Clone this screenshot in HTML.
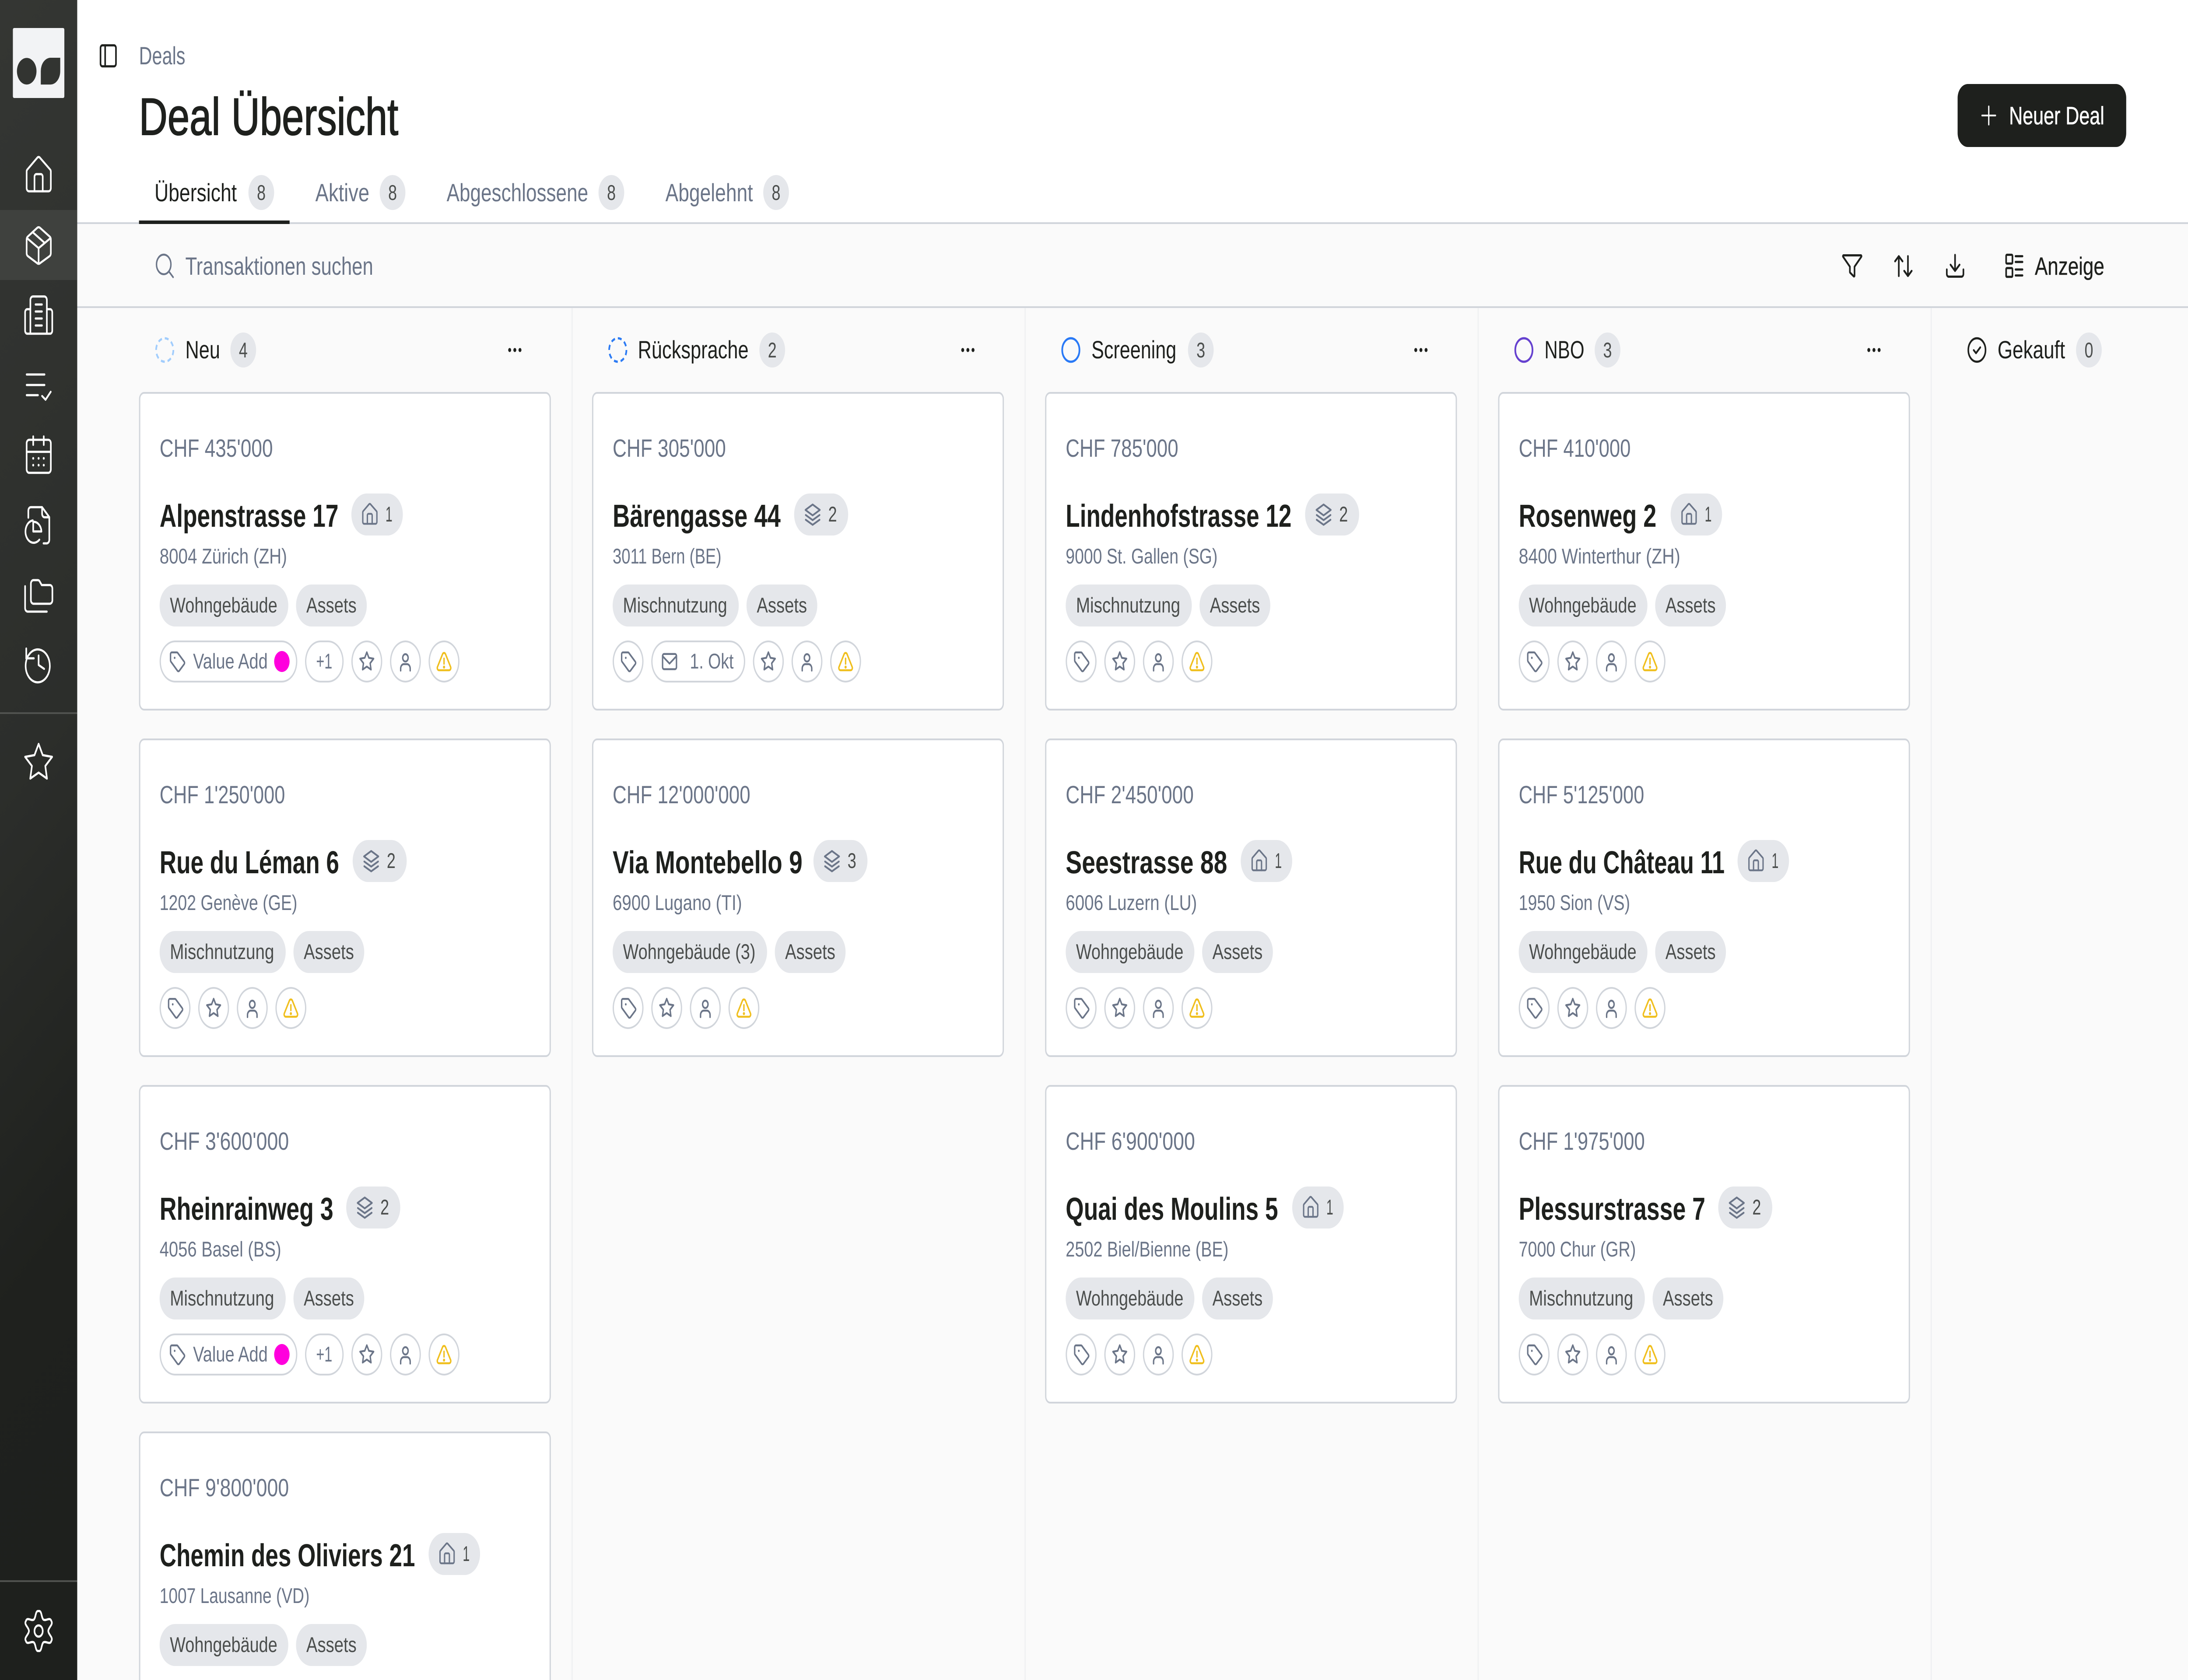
<!DOCTYPE html>
<html lang="de"><head><meta charset="utf-8"><title>Deal Übersicht</title>
<style>
html,body{margin:0;padding:0;background:#fafafa;width:100%;height:3840px;overflow:hidden}
svg{display:block;width:100vw;height:3840px}
text{font-family:"Liberation Sans",Arial,sans-serif;text-rendering:geometricPrecision;white-space:pre}
.t14{font-size:14.3px}
.t12{font-size:12.2px}
.g{fill:#6b7588}
.d{fill:#1e201d}
.n{fill:#4b4e4d}
.ttl{font-size:18.2px;font-weight:700;fill:#1e201d}
.bdg{font-size:12.2px;fill:#4b4e4d;text-anchor:middle}
.side{fill:none;stroke:#fff;stroke-width:1.25;stroke-linecap:round;stroke-linejoin:round}
.ico{fill:none;stroke:#1e201d;stroke-width:1.25;stroke-linecap:round;stroke-linejoin:round}
.sm{fill:none;stroke:#6b7588;stroke-width:1.1;stroke-linecap:round;stroke-linejoin:round}
</style></head><body>
<svg xmlns="http://www.w3.org/2000/svg" viewBox="0 0 1700 960" preserveAspectRatio="none">
<defs>
<linearGradient id="sb" x1="0" y1="0" x2="0.06" y2="1">
<stop offset="0" stop-color="#343633"/><stop offset=".25" stop-color="#30322f"/><stop offset=".47" stop-color="#2c2e2b"/><stop offset=".78" stop-color="#1f211e"/><stop offset="1" stop-color="#1e201d"/>
</linearGradient>
<g id="homeP"><path d="M2.7 10a1.5 1.5 0 0 1 .4-1L10.9 2.2a1.5 1.5 0 0 1 2.2 0L21.1 9a1.5 1.5 0 0 1 .4 1V19.5a1.8 1.8 0 0 1-1.8 1.8H4.5a1.8 1.8 0 0 1-1.8-1.8Z"/><path d="M8.8 21.3V13a1.5 1.5 0 0 1 1.5-1.5h3.4a1.5 1.5 0 0 1 1.5 1.5V21.3"/></g>
<path id="starP" d="M12 1.6 15.2 8 22.5 9 17.2 14.2 18.5 21.4 12 18 5.5 21.4 6.8 14.2 1.5 9 8.8 8Z"/>
<g id="pHome"><rect width="40" height="24" rx="12" fill="#e5e7eb"/><g transform="translate(7.3 4.9) scale(.5833)" class="sm" style="stroke-width:1.8"><use href="#homeP"/></g></g>
<g id="pLayers"><rect width="42" height="24" rx="12" fill="#e5e7eb"/><g transform="translate(7.4 5)" class="sm" style="stroke-width:1.1"><path d="M7 1.3 12.6 4.4 7 7.5 1.4 4.4Z"/><path d="M1.6 7.3 7 10.2 12.4 7.3"/><path d="M1.6 10 7 12.9 12.4 10"/></g></g>
<g id="tagI" class="sm"><path d="M.5 1.6a1 1 0 0 1 1-1h3.9a1 1 0 0 1 .7.3l5 5a1 1 0 0 1 0 1.4l-3.8 3.8a1 1 0 0 1-1.4 0L.8 5.9a1 1 0 0 1-.3-.7Z"/><circle cx="3.7" cy="3.7" r=".65" fill="#6b7588" stroke="none"/></g>
<rect id="c" x=".5" y=".5" width="23" height="23" rx="11.5" fill="#fff" stroke="#d1d5db"/>
<g id="cTag"><use href="#c"/><use href="#tagI" x="6.5" y="6.2"/></g>
<g id="cStar"><use href="#c"/><g transform="translate(6 5.9) scale(.5)" class="sm" style="stroke-width:2.2"><use href="#starP"/></g></g>
<g id="cPerson"><use href="#c"/><g class="sm"><circle cx="12" cy="9.9" r="2.1"/><path d="M8.3 17.2v-1.2a2.5 2.5 0 0 1 2.5-2.5h2.4a2.5 2.5 0 0 1 2.5 2.5v1.2"/></g></g>
<g id="cWarn"><use href="#c"/><g fill="none" stroke="#f0bf1e" stroke-width="1.1" stroke-linecap="round" stroke-linejoin="round"><path d="M10.9 7.7a1.3 1.3 0 0 1 2.2 0l4 7.4a1.3 1.3 0 0 1-1.1 1.9h-8a1.3 1.3 0 0 1-1.1-1.9Z"/><path d="M12 10.3v3"/><circle cx="12" cy="15.2" r=".3" fill="#f0bf1e"/></g></g>
<g id="trio"><use href="#cStar"/><use href="#cPerson" x="30"/><use href="#cWarn" x="60"/></g>
<g id="simple"><use href="#cTag"/><use href="#trio" x="30"/></g>
<g id="vaShape"><rect x=".5" y=".5" width="106" height="23" rx="11.5" fill="#fff" stroke="#d1d5db"/><use href="#tagI" x="8" y="6.2"/><circle cx="95" cy="12" r="6" fill="#ff00dd"/><rect x="113.5" y=".5" width="29" height="23" rx="11.5" fill="#fff" stroke="#d1d5db"/><use href="#trio" x="149"/></g>
<rect id="card" x=".5" y=".5" width="319" height="181" rx="3.5" fill="#fff" stroke="#d1d5db"/>
<g id="dots" fill="#1e201d"><circle cx="-4" r="1.15"/><circle r="1.15"/><circle cx="4" r="1.15"/></g>
</defs>

<rect width="1700" height="960" fill="#fafafa"/>
<!-- header -->
<rect x="60" width="1640" height="127" fill="#fff"/>
<rect x="60" y="127" width="1640" height="1" fill="#d1d5db"/>
<rect x="60" y="175" width="1640" height="1" fill="#d1d5db"/>
<!-- column separators -->
<g fill="#f0f1f3"><rect x="444" y="176" width="1" height="784"/><rect x="796" y="176" width="1" height="784"/><rect x="1148" y="176" width="1" height="784"/><rect x="1500" y="176" width="1" height="784"/></g>

<!-- sidebar -->
<rect width="60" height="960" fill="url(#sb)"/>
<rect y="120" width="60" height="40" fill="#3f413e"/>
<rect x="10" y="16" width="40" height="40" rx="1" fill="#f2f3f5"/>
<circle cx="20.75" cy="40.7" r="7.6" fill="#323431"/>
<path d="M31.7 48.3V40.7A7.6 7.6 0 0 1 39.3 33H46.8V40.7A7.6 7.6 0 0 1 39.2 48.3Z" fill="#323431"/>
<g class="side">
<g transform="translate(18 88)"><use href="#homeP"/></g>
<path d="M28.9 130.2a2 2 0 0 1 2.2 0l7.4 4.9a2 2 0 0 1 1 1.7v7.9a2 2 0 0 1-1 1.7l-7.4 4a2 2 0 0 1-2.2 0l-7.2-4a2 2 0 0 1-1-1.7v-7.9a2 2 0 0 1 1-1.7Z"/>
<path d="M21 136.1 30 141.8 39.2 136.1M30 141.8V150.5M25.3 132.6 34.4 138.6"/>
<path d="M23.6 190.7V171.4a2 2 0 0 1 2-2h8.8a2 2 0 0 1 2 2V190.7M23.6 176.7H21.2a1.7 1.7 0 0 0-1.7 1.7V189a1.7 1.7 0 0 0 1.7 1.7H38.9a1.7 1.7 0 0 0 1.7-1.7V178.4a1.7 1.7 0 0 0-1.7-1.7H36.4M27.6 174H32.6M27.6 178H32.6M27.6 182H32.6M27.6 186H32.6"/>
<path d="M20.7 214H34.6M20.7 220H34.6M20.7 225.8H29.5M32.7 226.3 35.4 228.4 39.4 223.9"/>
<rect x="20.7" y="251.3" width="18.8" height="18.9" rx="2"/><path d="M25.8 249.4V254.2M34 249.4V254.2M20.7 258.2H39.5"/>
<g fill="#fff" stroke="none"><circle cx="25.8" cy="261.9" r=".75"/><circle cx="30" cy="261.9" r=".75"/><circle cx="34" cy="261.9" r=".75"/><circle cx="25.8" cy="265.8" r=".75"/><circle cx="30" cy="265.8" r=".75"/><circle cx="34" cy="265.8" r=".75"/></g>
<path d="M22 295.8V291.8a2 2 0 0 1 2-2H32.7L38.3 295.5V308.5a2 2 0 0 1-2 2H33.8M32.7 289.8V293.6a2 2 0 0 0 2 2H38.3"/>
<path d="M30.6 308.4A6.4 6.4 0 1 1 25.5 297.4"/>
<path d="M25.8 298.2V303.7H32.2A6 6 0 0 0 25.8 298.2Z"/>
<path d="M24 338V333.5a2 2 0 0 1 2-2H29.3a2 2 0 0 1 1.6.8L32.4 334.3H38.7a2 2 0 0 1 2 2V343a2 2 0 0 1-2 2H26a2 2 0 0 1-2-2Z"/>
<path d="M19.5 335V347.5a2 2 0 0 0 2 2H36.4"/>
<path d="M20.6 377A9.4 9.4 0 1 0 23.4 373.2L20.4 376.2"/><path d="M20.4 370.6V376.2H26.3"/><path d="M30 374.6V380L34.3 382.2"/>
<g transform="translate(18 423.5)"><use href="#starP"/></g>
<g transform="translate(30 932)">
<path id="gb" d="M-3.75-6.5C-2-7.6-2.6-11.9 0-11.4 2.6-11.9 2-7.6 3.75-6.5"/>
<use href="#gb" transform="rotate(60)"/><use href="#gb" transform="rotate(120)"/><use href="#gb" transform="rotate(180)"/><use href="#gb" transform="rotate(240)"/><use href="#gb" transform="rotate(300)"/>
<circle r="3.2"/>
</g>
</g>
<rect y="407" width="60" height="1" fill="#50524f"/>
<rect y="903" width="60" height="1" fill="#50524f"/>

<!-- page head -->
<g class="ico"><rect x="78.1" y="25.9" width="12" height="12" rx="1.5"/><path d="M81.7 25.9V37.9"/></g>
<text x="108" y="36.8" class="t14 g" textLength="36" lengthAdjust="spacingAndGlyphs">Deals</text>
<text x="108" y="77" font-size="30" class="d" stroke="#1e201d" stroke-width=".5" textLength="201.5" lengthAdjust="spacingAndGlyphs">Deal Übersicht</text>

<rect x="1521" y="48" width="131" height="36" rx="8" fill="#1e201d"/>
<path d="M1540 66H1550.4M1545.2 60.8V71.2" stroke="#fff" stroke-width="1" stroke-linecap="round"/>
<text x="1561" y="71" class="t14" fill="#fff" stroke="#fff" stroke-width=".18" textLength="74" lengthAdjust="spacingAndGlyphs">Neuer Deal</text>

<!-- tabs -->
<text x="120" y="115" class="t14 d" textLength="64" lengthAdjust="spacingAndGlyphs">Übersicht</text>
<circle cx="203" cy="110" r="10" fill="#e5e7eb"/><text x="203" y="114.3" class="bdg">8</text>
<rect x="108" y="126" width="117" height="2" fill="#1e201d"/>
<text x="245" y="115" class="t14 g" textLength="42" lengthAdjust="spacingAndGlyphs">Aktive</text>
<circle cx="305" cy="110" r="10" fill="#e5e7eb"/><text x="305" y="114.3" class="bdg">8</text>
<text x="347" y="115" class="t14 g" textLength="110" lengthAdjust="spacingAndGlyphs">Abgeschlossene</text>
<circle cx="475" cy="110" r="10" fill="#e5e7eb"/><text x="475" y="114.3" class="bdg">8</text>
<text x="517" y="115" class="t14 g" textLength="68" lengthAdjust="spacingAndGlyphs">Abgelehnt</text>
<circle cx="603" cy="110" r="10" fill="#e5e7eb"/><text x="603" y="114.3" class="bdg">8</text>

<!-- toolbar -->
<g fill="none" stroke="#6b7588" stroke-width="1.1" stroke-linecap="round"><circle cx="127.2" cy="151.1" r="5.6"/><path d="M131.4 155.3 134.5 158.4"/></g>
<text x="144" y="157" class="t14 g" textLength="146" lengthAdjust="spacingAndGlyphs">Transaktionen suchen</text>
<g class="ico">
<path d="M1432.4 145.9H1445.8a.5.5 0 0 1 .4.8L1440.9 152.4V157.6a.4.4 0 0 1-.6.3L1437.6 155.9a.6.6 0 0 1-.3-.5V152.4L1432 146.7a.5.5 0 0 1 .4-.8Z"/>
<path d="M1475.3 157.7V146.4M1472.4 149.3 1475.3 146.4 1478.2 149.3M1482.4 146.4V157.7M1479.5 154.8 1482.4 157.7 1485.3 154.8"/>
<path d="M1519 145.7V154.6M1515.5 151.3 1519 154.8 1522.5 151.3M1512.6 154V156.6a1.5 1.5 0 0 0 1.5 1.5H1524a1.5 1.5 0 0 0 1.5-1.5V154"/>
<rect x="1558.7" y="145.6" width="4.9" height="5" rx=".6"/><rect x="1558.7" y="153.2" width="4.9" height="5" rx=".6"/><path d="M1566 146.4H1571.4M1566 149.7H1571.4M1566 154H1571.4M1566 157.4H1571.4"/>
</g>
<text x="1581" y="157" class="t14 d" stroke="#1e201d" stroke-width=".12" textLength="54" lengthAdjust="spacingAndGlyphs">Anzeige</text>

<!-- column headers -->
<circle cx="128" cy="200" r="6.7" fill="none" stroke="#a1cdfd" stroke-width="1.3" stroke-dasharray="3 2.26"/>
<text x="144" y="204.8" class="t14 d" textLength="27" lengthAdjust="spacingAndGlyphs">Neu</text>
<circle cx="189" cy="200" r="10" fill="#e5e7eb"/><text x="189" y="204.3" class="bdg">4</text>
<use href="#dots" x="400" y="200"/>

<circle cx="480" cy="200" r="6.7" fill="none" stroke="#2c7bf4" stroke-width="1.3" stroke-dasharray="3 2.26"/>
<text x="495.6" y="204.8" class="t14 d" textLength="86" lengthAdjust="spacingAndGlyphs">Rücksprache</text>
<circle cx="600" cy="200" r="10" fill="#e5e7eb"/><text x="600" y="204.3" class="bdg">2</text>
<use href="#dots" x="752" y="200"/>

<circle cx="832" cy="200" r="6.7" fill="none" stroke="#2979f6" stroke-width="1.3"/>
<text x="848" y="204.8" class="t14 d" textLength="66" lengthAdjust="spacingAndGlyphs">Screening</text>
<circle cx="933" cy="200" r="10" fill="#e5e7eb"/><text x="933" y="204.3" class="bdg">3</text>
<use href="#dots" x="1104" y="200"/>

<circle cx="1184" cy="200" r="6.7" fill="none" stroke="#6541cf" stroke-width="1.3"/>
<text x="1200" y="204.8" class="t14 d" textLength="31" lengthAdjust="spacingAndGlyphs">NBO</text>
<circle cx="1249" cy="200" r="10" fill="#e5e7eb"/><text x="1249" y="204.3" class="bdg">3</text>
<use href="#dots" x="1456" y="200"/>

<g fill="none" stroke="#1e201d" stroke-width="1.2" stroke-linecap="round" stroke-linejoin="round"><circle cx="1536" cy="200" r="6.7"/><path d="M1533.5 200.1 1535.3 201.8 1538.6 198.5"/></g>
<text x="1552" y="204.8" class="t14 d" textLength="52.5" lengthAdjust="spacingAndGlyphs">Gekauft</text>
<circle cx="1623" cy="200" r="10" fill="#e5e7eb"/><text x="1623" y="204.3" class="bdg">0</text>

<!-- COLUMN 1 -->
<g transform="translate(108 224)">
<use href="#card"/>
<text x="16" y="37" class="t14 g" textLength="88" lengthAdjust="spacingAndGlyphs">CHF 435'000</text>
<text x="16" y="77" class="ttl" textLength="139" lengthAdjust="spacingAndGlyphs">Alpenstrasse 17</text>
<use href="#pHome" x="165" y="58"/><text x="191.5" y="74" class="t12 n" textLength="5.4" lengthAdjust="spacingAndGlyphs">1</text>
<text x="16" y="98" class="t12 g" textLength="99" lengthAdjust="spacingAndGlyphs">8004 Zürich (ZH)</text>
<rect x="16" y="110" width="100" height="24" rx="12" fill="#e5e7eb"/><text x="24" y="126" class="t12 n" textLength="83.5" lengthAdjust="spacingAndGlyphs">Wohngebäude</text>
<rect x="122" y="110" width="55" height="24" rx="12" fill="#e5e7eb"/><text x="130" y="126" class="t12 n" textLength="39" lengthAdjust="spacingAndGlyphs">Assets</text>
<use href="#vaShape" x="16" y="142"/>
<text x="42" y="158" class="t12 g" textLength="58" lengthAdjust="spacingAndGlyphs">Value Add</text>
<text x="137.6" y="158" class="t12 g" textLength="12.6" lengthAdjust="spacingAndGlyphs">+1</text>
</g>
<g transform="translate(108 422)">
<use href="#card"/>
<text x="16" y="37" class="t14 g" textLength="97.5" lengthAdjust="spacingAndGlyphs">CHF 1'250'000</text>
<text x="16" y="77" class="ttl" textLength="139.5" lengthAdjust="spacingAndGlyphs">Rue du Léman 6</text>
<use href="#pLayers" x="166" y="58"/><text x="192.5" y="74" class="t12 n" textLength="6.8" lengthAdjust="spacingAndGlyphs">2</text>
<text x="16" y="98" class="t12 g" textLength="107" lengthAdjust="spacingAndGlyphs">1202 Genève (GE)</text>
<rect x="16" y="110" width="98" height="24" rx="12" fill="#e5e7eb"/><text x="24" y="126" class="t12 n" textLength="81" lengthAdjust="spacingAndGlyphs">Mischnutzung</text>
<rect x="120" y="110" width="55" height="24" rx="12" fill="#e5e7eb"/><text x="128" y="126" class="t12 n" textLength="39" lengthAdjust="spacingAndGlyphs">Assets</text>
<use href="#simple" x="16" y="142"/>
</g>
<g transform="translate(108 620)">
<use href="#card"/>
<text x="16" y="37" class="t14 g" textLength="100.5" lengthAdjust="spacingAndGlyphs">CHF 3'600'000</text>
<text x="16" y="77" class="ttl" textLength="135" lengthAdjust="spacingAndGlyphs">Rheinrainweg 3</text>
<use href="#pLayers" x="161" y="58"/><text x="187.5" y="74" class="t12 n" textLength="6.8" lengthAdjust="spacingAndGlyphs">2</text>
<text x="16" y="98" class="t12 g" textLength="94.5" lengthAdjust="spacingAndGlyphs">4056 Basel (BS)</text>
<rect x="16" y="110" width="98" height="24" rx="12" fill="#e5e7eb"/><text x="24" y="126" class="t12 n" textLength="81" lengthAdjust="spacingAndGlyphs">Mischnutzung</text>
<rect x="120" y="110" width="55" height="24" rx="12" fill="#e5e7eb"/><text x="128" y="126" class="t12 n" textLength="39" lengthAdjust="spacingAndGlyphs">Assets</text>
<use href="#vaShape" x="16" y="142"/>
<text x="42" y="158" class="t12 g" textLength="58" lengthAdjust="spacingAndGlyphs">Value Add</text>
<text x="137.6" y="158" class="t12 g" textLength="12.6" lengthAdjust="spacingAndGlyphs">+1</text>
</g>
<g transform="translate(108 818)">
<use href="#card"/>
<text x="16" y="37" class="t14 g" textLength="100.5" lengthAdjust="spacingAndGlyphs">CHF 9'800'000</text>
<text x="16" y="77" class="ttl" textLength="198.5" lengthAdjust="spacingAndGlyphs">Chemin des Oliviers 21</text>
<use href="#pHome" x="225" y="58"/><text x="251.5" y="74" class="t12 n" textLength="5.4" lengthAdjust="spacingAndGlyphs">1</text>
<text x="16" y="98" class="t12 g" textLength="116.5" lengthAdjust="spacingAndGlyphs">1007 Lausanne (VD)</text>
<rect x="16" y="110" width="100" height="24" rx="12" fill="#e5e7eb"/><text x="24" y="126" class="t12 n" textLength="83.5" lengthAdjust="spacingAndGlyphs">Wohngebäude</text>
<rect x="122" y="110" width="55" height="24" rx="12" fill="#e5e7eb"/><text x="130" y="126" class="t12 n" textLength="39" lengthAdjust="spacingAndGlyphs">Assets</text>
</g>

<!-- COLUMN 2 -->
<g transform="translate(460 224)">
<use href="#card"/>
<text x="16" y="37" class="t14 g" textLength="88" lengthAdjust="spacingAndGlyphs">CHF 305'000</text>
<text x="16" y="77" class="ttl" textLength="130.5" lengthAdjust="spacingAndGlyphs">Bärengasse 44</text>
<use href="#pLayers" x="157" y="58"/><text x="183.5" y="74" class="t12 n" textLength="6.8" lengthAdjust="spacingAndGlyphs">2</text>
<text x="16" y="98" class="t12 g" textLength="84.5" lengthAdjust="spacingAndGlyphs">3011 Bern (BE)</text>
<rect x="16" y="110" width="98" height="24" rx="12" fill="#e5e7eb"/><text x="24" y="126" class="t12 n" textLength="81" lengthAdjust="spacingAndGlyphs">Mischnutzung</text>
<rect x="120" y="110" width="55" height="24" rx="12" fill="#e5e7eb"/><text x="128" y="126" class="t12 n" textLength="39" lengthAdjust="spacingAndGlyphs">Assets</text>
<use href="#cTag" x="16" y="142"/>
<rect x="46.5" y="142.5" width="72" height="23" rx="11.5" fill="#fff" stroke="#d1d5db"/>
<g class="sm"><rect x="54.8" y="149.7" width="10.8" height="8.7" rx="1.2"/><path d="M54.9 151 60.2 155.2 65.5 151"/></g>
<text x="76" y="158" class="t12 g" textLength="34" lengthAdjust="spacingAndGlyphs">1. Okt</text>
<use href="#trio" x="125" y="142"/>
</g>
<g transform="translate(460 422)">
<use href="#card"/>
<text x="16" y="37" class="t14 g" textLength="107" lengthAdjust="spacingAndGlyphs">CHF 12'000'000</text>
<text x="16" y="77" class="ttl" textLength="147.5" lengthAdjust="spacingAndGlyphs">Via Montebello 9</text>
<use href="#pLayers" x="172" y="58"/><text x="198.5" y="74" class="t12 n" textLength="6.8" lengthAdjust="spacingAndGlyphs">3</text>
<text x="16" y="98" class="t12 g" textLength="100.5" lengthAdjust="spacingAndGlyphs">6900 Lugano (TI)</text>
<rect x="16" y="110" width="120" height="24" rx="12" fill="#e5e7eb"/><text x="24" y="126" class="t12 n" textLength="103" lengthAdjust="spacingAndGlyphs">Wohngebäude (3)</text>
<rect x="142" y="110" width="55" height="24" rx="12" fill="#e5e7eb"/><text x="150" y="126" class="t12 n" textLength="39" lengthAdjust="spacingAndGlyphs">Assets</text>
<use href="#simple" x="16" y="142"/>
</g>

<!-- COLUMN 3 -->
<g transform="translate(812 224)">
<use href="#card"/>
<text x="16" y="37" class="t14 g" textLength="87.5" lengthAdjust="spacingAndGlyphs">CHF 785'000</text>
<text x="16" y="77" class="ttl" textLength="175.5" lengthAdjust="spacingAndGlyphs">Lindenhofstrasse 12</text>
<use href="#pLayers" x="202" y="58"/><text x="228.5" y="74" class="t12 n" textLength="6.8" lengthAdjust="spacingAndGlyphs">2</text>
<text x="16" y="98" class="t12 g" textLength="118" lengthAdjust="spacingAndGlyphs">9000 St. Gallen (SG)</text>
<rect x="16" y="110" width="98" height="24" rx="12" fill="#e5e7eb"/><text x="24" y="126" class="t12 n" textLength="81" lengthAdjust="spacingAndGlyphs">Mischnutzung</text>
<rect x="120" y="110" width="55" height="24" rx="12" fill="#e5e7eb"/><text x="128" y="126" class="t12 n" textLength="39" lengthAdjust="spacingAndGlyphs">Assets</text>
<use href="#simple" x="16" y="142"/>
</g>
<g transform="translate(812 422)">
<use href="#card"/>
<text x="16" y="37" class="t14 g" textLength="99.5" lengthAdjust="spacingAndGlyphs">CHF 2'450'000</text>
<text x="16" y="77" class="ttl" textLength="125.5" lengthAdjust="spacingAndGlyphs">Seestrasse 88</text>
<use href="#pHome" x="152" y="58"/><text x="178.5" y="74" class="t12 n" textLength="5.4" lengthAdjust="spacingAndGlyphs">1</text>
<text x="16" y="98" class="t12 g" textLength="102" lengthAdjust="spacingAndGlyphs">6006 Luzern (LU)</text>
<rect x="16" y="110" width="100" height="24" rx="12" fill="#e5e7eb"/><text x="24" y="126" class="t12 n" textLength="83.5" lengthAdjust="spacingAndGlyphs">Wohngebäude</text>
<rect x="122" y="110" width="55" height="24" rx="12" fill="#e5e7eb"/><text x="130" y="126" class="t12 n" textLength="39" lengthAdjust="spacingAndGlyphs">Assets</text>
<use href="#simple" x="16" y="142"/>
</g>
<g transform="translate(812 620)">
<use href="#card"/>
<text x="16" y="37" class="t14 g" textLength="100.5" lengthAdjust="spacingAndGlyphs">CHF 6'900'000</text>
<text x="16" y="77" class="ttl" textLength="165" lengthAdjust="spacingAndGlyphs">Quai des Moulins 5</text>
<use href="#pHome" x="192" y="58"/><text x="218.5" y="74" class="t12 n" textLength="5.4" lengthAdjust="spacingAndGlyphs">1</text>
<text x="16" y="98" class="t12 g" textLength="126.5" lengthAdjust="spacingAndGlyphs">2502 Biel/Bienne (BE)</text>
<rect x="16" y="110" width="100" height="24" rx="12" fill="#e5e7eb"/><text x="24" y="126" class="t12 n" textLength="83.5" lengthAdjust="spacingAndGlyphs">Wohngebäude</text>
<rect x="122" y="110" width="55" height="24" rx="12" fill="#e5e7eb"/><text x="130" y="126" class="t12 n" textLength="39" lengthAdjust="spacingAndGlyphs">Assets</text>
<use href="#simple" x="16" y="142"/>
</g>

<!-- COLUMN 4 -->
<g transform="translate(1164 224)">
<use href="#card"/>
<text x="16" y="37" class="t14 g" textLength="87" lengthAdjust="spacingAndGlyphs">CHF 410'000</text>
<text x="16" y="77" class="ttl" textLength="107" lengthAdjust="spacingAndGlyphs">Rosenweg 2</text>
<use href="#pHome" x="134" y="58"/><text x="160.5" y="74" class="t12 n" textLength="5.4" lengthAdjust="spacingAndGlyphs">1</text>
<text x="16" y="98" class="t12 g" textLength="125.5" lengthAdjust="spacingAndGlyphs">8400 Winterthur (ZH)</text>
<rect x="16" y="110" width="100" height="24" rx="12" fill="#e5e7eb"/><text x="24" y="126" class="t12 n" textLength="83.5" lengthAdjust="spacingAndGlyphs">Wohngebäude</text>
<rect x="122" y="110" width="55" height="24" rx="12" fill="#e5e7eb"/><text x="130" y="126" class="t12 n" textLength="39" lengthAdjust="spacingAndGlyphs">Assets</text>
<use href="#simple" x="16" y="142"/>
</g>
<g transform="translate(1164 422)">
<use href="#card"/>
<text x="16" y="37" class="t14 g" textLength="97.5" lengthAdjust="spacingAndGlyphs">CHF 5'125'000</text>
<text x="16" y="77" class="ttl" textLength="160" lengthAdjust="spacingAndGlyphs">Rue du Château 11</text>
<use href="#pHome" x="186" y="58"/><text x="212.5" y="74" class="t12 n" textLength="5.4" lengthAdjust="spacingAndGlyphs">1</text>
<text x="16" y="98" class="t12 g" textLength="86.5" lengthAdjust="spacingAndGlyphs">1950 Sion (VS)</text>
<rect x="16" y="110" width="100" height="24" rx="12" fill="#e5e7eb"/><text x="24" y="126" class="t12 n" textLength="83.5" lengthAdjust="spacingAndGlyphs">Wohngebäude</text>
<rect x="122" y="110" width="55" height="24" rx="12" fill="#e5e7eb"/><text x="130" y="126" class="t12 n" textLength="39" lengthAdjust="spacingAndGlyphs">Assets</text>
<use href="#simple" x="16" y="142"/>
</g>
<g transform="translate(1164 620)">
<use href="#card"/>
<text x="16" y="37" class="t14 g" textLength="98" lengthAdjust="spacingAndGlyphs">CHF 1'975'000</text>
<text x="16" y="77" class="ttl" textLength="145" lengthAdjust="spacingAndGlyphs">Plessurstrasse 7</text>
<use href="#pLayers" x="171" y="58"/><text x="197.5" y="74" class="t12 n" textLength="6.8" lengthAdjust="spacingAndGlyphs">2</text>
<text x="16" y="98" class="t12 g" textLength="91" lengthAdjust="spacingAndGlyphs">7000 Chur (GR)</text>
<rect x="16" y="110" width="98" height="24" rx="12" fill="#e5e7eb"/><text x="24" y="126" class="t12 n" textLength="81" lengthAdjust="spacingAndGlyphs">Mischnutzung</text>
<rect x="120" y="110" width="55" height="24" rx="12" fill="#e5e7eb"/><text x="128" y="126" class="t12 n" textLength="39" lengthAdjust="spacingAndGlyphs">Assets</text>
<use href="#simple" x="16" y="142"/>
</g>
</svg>
</body></html>
